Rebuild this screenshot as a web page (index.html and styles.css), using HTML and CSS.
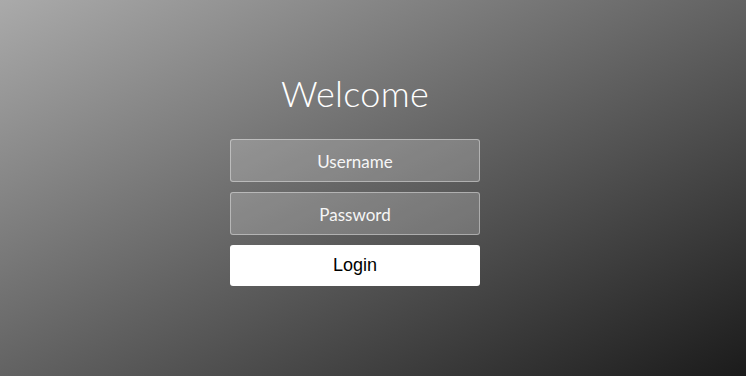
FILE: index.html
```html
<!DOCTYPE html>
<html lang="en">
<head>
    <meta charset="UTF-8">
    <meta name="viewport" content="width=device-width, initial-scale=1.0">
    <title>Login</title>
    <link rel="stylesheet" href="styles.css">
</head>
<body>
    <div class="wrapper">
        <div class="container">
            <h1>Welcome</h1>
            <form class="form">
                <input type="text" placeholder="Username">
                <input type="password" placeholder="Password">
                <button type="submit" class="login-button">Login</button>
            </form>
        </div>
    </div>
</body>
</html>
```

FILE: styles.css
```css
* {
    box-sizing: border-box;
}

html, body {
    margin: 0;
    height: 100%;
}

body {
    font-family: 'Lato', sans-serif;
    font-weight: 300;
    overflow: hidden;
}

.wrapper {
    height: 100%;
    background: linear-gradient(to bottom right, #aaaaaa 0%, #1b1b1b 100%);
    display: flex;
    justify-content: center;
    padding-right: 36px;
}

.container {
    width: 250px;
    padding-top: 70px;
    text-align: center;
}

h1 {
    margin: 0 0 23px 0;
    font-size: 36px;
    font-weight: 300;
    color: white;
    line-height: 46px;
    letter-spacing: 0.3px;
}

.form {
    display: flex;
    flex-direction: column;
    gap: 10px;
}

.form input {
    appearance: none;
    outline: 0;
    width: 250px;
    height: 43px;
    border: 1px solid rgba(255, 255, 255, 0.4);
    background-color: rgba(255, 255, 255, 0.2);
    border-radius: 3px;
    padding: 11px 15px 9px;
    text-align: center;
    font-family: 'Lato', sans-serif;
    font-weight: 400;
    font-size: 17px;
    color: white;
}

.form input::placeholder {
    color: #f6f6f6;
}

.login-button {
    width: 250px;
    height: 41px;
    border: 0;
    border-radius: 3px;
    background-color: white;
    color: black;
    font-family: 'Liberation Sans', Arial, sans-serif;
    font-size: 18px;
    cursor: pointer;
}
```
